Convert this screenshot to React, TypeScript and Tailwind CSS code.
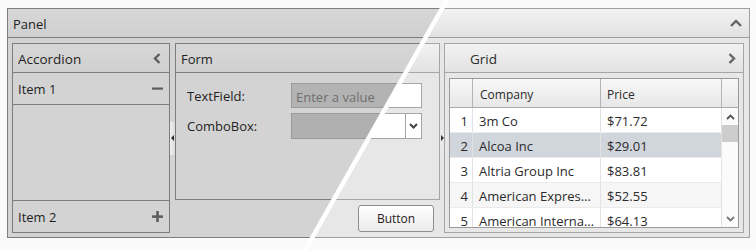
import React from "react";

type Theme = {
  side: "left" | "right";
  page: string;
  panelBorder: string;
  boxBorder: string;
  body: string;
  header: string;
  text: string;
  icon: string;
  input: string;
  combo: string;
  comboBtn: string;
  handle: string;
  arrow: string;
};

const dark: Theme = {
  side: "left",
  page: "bg-[#fafafa]",
  panelBorder: "border-[#7d7d7d]",
  boxBorder: "border-[#7d7d7d]",
  body: "bg-[#d3d3d3]",
  header: "bg-[linear-gradient(#d7d7d7,#d0d0d0)]",
  text: "text-[#1f1f1f]",
  icon: "#5e5e5e",
  input: "bg-[#b3b3b3] border-[#9a9a9a] placeholder:text-[#6f6f6f]",
  combo: "bg-[#b0b0b0] border-[#9a9a9a]",
  comboBtn: "bg-[#b0b0b0] border-[#9a9a9a]",
  handle: "bg-[linear-gradient(90deg,#f0f0f0,#dcdcdc)]",
  arrow: "#2a2a2a",
};

const light: Theme = {
  side: "right",
  page: "bg-[#fafafa]",
  panelBorder: "border-[#a0a0a0]",
  boxBorder: "border-[#a6a6a6]",
  body: "bg-[#e7e7e7]",
  header: "bg-[linear-gradient(#f2f2f2,#e2e2e2)]",
  text: "text-[#2b2b2b]",
  icon: "#666666",
  input: "bg-white border-[#a6a6a6] placeholder:text-[#8e8e8e]",
  combo: "bg-white border-[#a6a6a6]",
  comboBtn: "bg-white border-[#a6a6a6]",
  handle: "bg-[#e9e9e9]",
  arrow: "#333333",
};

const Chevron = ({ dir, c }: { dir: "up" | "down" | "left" | "right"; c: string }) => {
  if (dir === "up")
    return (
      <svg width="12" height="8" viewBox="0 0 12 8">
        <path d="M1 7 L6 2 L11 7" fill="none" stroke={c} strokeWidth="2.4" />
      </svg>
    );
  if (dir === "down")
    return (
      <svg width="9" height="6" viewBox="0 0 9 6">
        <path d="M1 1 L4.5 4.5 L8 1" fill="none" stroke={c} strokeWidth="2" />
      </svg>
    );
  if (dir === "left")
    return (
      <svg width="8" height="11" viewBox="0 0 8 11">
        <path d="M6.5 1 L2 5.5 L6.5 10" fill="none" stroke={c} strokeWidth="2.4" />
      </svg>
    );
  return (
    <svg width="8" height="11" viewBox="0 0 8 11">
      <path d="M1.5 1 L6 5.5 L1.5 10" fill="none" stroke={c} strokeWidth="2.4" />
    </svg>
  );
};

const Minus = ({ c }: { c: string }) => (
  <svg width="11" height="11" viewBox="0 0 11 11">
    <rect x="0" y="4.5" width="11" height="2.2" fill={c} />
  </svg>
);

const Plus = ({ c }: { c: string }) => (
  <svg width="11" height="11" viewBox="0 0 11 11">
    <rect x="0" y="4.3" width="11" height="2.6" fill={c} />
    <rect x="4.2" y="0" width="2.6" height="11" fill={c} />
  </svg>
);

const rows = [
  { n: 1, company: "3m Co", price: "$71.72", bg: "bg-white" },
  { n: 2, company: "Alcoa Inc", price: "$29.01", bg: "bg-[#d1d5dc]" },
  { n: 3, company: "Altria Group Inc", price: "$83.81", bg: "bg-white" },
  { n: 4, company: "American Expres…", price: "$52.55", bg: "bg-[#f6f6f6]" },
  { n: 5, company: "American Interna…", price: "$64.13", bg: "bg-white" },
];

function Table({ show }: { show: boolean }) {
  return (
    <div className="w-[290px] h-[150px] border border-[#9a9a9a] bg-white flex flex-col overflow-hidden text-[#2b2b2b]">
      <div className="h-[29px] shrink-0 flex border-b border-[#a9a9a9] bg-[linear-gradient(#f8f8f8,#e7e7e7)] text-[12px]">
        <div className="w-[23px] border-r border-[#b3b3b3]" />
        <div className="w-[128px] border-r border-[#b3b3b3] pl-[7px] pt-[3px] flex items-center">{show && "Company"}</div>
        <div className="w-[121px] border-r border-[#b3b3b3] pl-[6px] pt-[3px] flex items-center">{show && "Price"}</div>
        <div className="w-[16px]" />
      </div>
      <div className="flex-1 flex min-h-0">
        <div className="w-[272px] flex flex-col text-[13px]">
          {rows.map((r) => (
            <div key={r.n} className={`h-[25px] shrink-0 flex border-b border-[#ebebeb] ${r.bg}`}>
              <div className="w-[23px] border-r border-[#e2e2e2] flex items-center justify-end pr-[4px] pt-[3px]">
                {show && r.n}
              </div>
              <div className="w-[128px] border-r border-[#e2e2e2] pl-[6px] pt-[3px] flex items-center whitespace-nowrap">
                {show && r.company}
              </div>
              <div className="w-[121px] border-r border-[#e2e2e2] pl-[6px] pt-[3px] flex items-center">
                {show && r.price}
              </div>
            </div>
          ))}
        </div>
        <div className="w-[16px] flex flex-col bg-[#fbfbfb]">
          <div className="h-[17px] flex items-center justify-center">
            <svg width="9" height="6" viewBox="0 0 9 6">
              <path d="M1 5 L4.5 1.5 L8 5" fill="none" stroke="#555" strokeWidth="1.8" />
            </svg>
          </div>
          <div className="h-[17px] bg-[#cdcdcd]" />
          <div className="flex-1" />
          <div className="h-[16px] flex items-center justify-center">
            <svg width="9" height="6" viewBox="0 0 9 6">
              <path d="M1 1 L4.5 4.5 L8 1" fill="none" stroke="#777" strokeWidth="1.8" />
            </svg>
          </div>
        </div>
      </div>
    </div>
  );
}

function Handle({ t, dir }: { t: Theme; dir: "left" | "right" }) {
  return (
    <div className={`w-full h-[33px] flex items-center justify-center ${t.handle}`}>
      <svg width="3" height="6" viewBox="0 0 3 6">
        {dir === "left" ? <path d="M3 0 L0 3 L3 6 Z" fill={t.arrow} /> : <path d="M0 0 L3 3 L0 6 Z" fill={t.arrow} />}
      </svg>
    </div>
  );
}

function Scene({ t }: { t: Theme }) {
  const L = t.side === "left";
  const R = t.side === "right";
  return (
    <div className={`w-[756px] h-[250px] pt-[8px] pl-[7px] font-['Open_Sans',sans-serif] text-[13px] ${t.page} ${t.text}`}>
      <div className={`w-[743px] h-[230px] border flex flex-col ${t.panelBorder} ${t.body}`}>
        <div className={`h-[29px] shrink-0 border-b flex items-center justify-between pl-[5px] pr-[7px] ${t.panelBorder} ${t.header}`}>
          <span className="pt-[3px]">{L && "Panel"}</span>
          <Chevron dir="up" c={t.icon} />
        </div>
        <div className="flex-1 flex pl-[4px] pr-[5px] pt-[5px] pb-[4px]">
          {/* Accordion */}
          <div className={`w-[158px] shrink-0 border flex flex-col ${t.boxBorder}`}>
            <div className={`h-[29px] shrink-0 border-b flex items-center justify-between pl-[5px] pr-[8px] ${t.boxBorder} ${t.header}`}>
              <span className="text-[13.5px] pt-[2px]">{L && "Accordion"}</span>
              <Chevron dir="left" c={t.icon} />
            </div>
            <div className={`h-[32px] shrink-0 border-b flex items-center justify-between pl-[5px] pr-[6px] ${t.boxBorder}`}>
              <span className="pt-[2px]">{L && "Item 1"}</span>
              <Minus c={t.icon} />
            </div>
            <div className="flex-1" />
            <div className={`h-[32px] shrink-0 border-t flex items-center justify-between pl-[5px] pr-[6px] ${t.boxBorder}`}>
              <span className="pt-[2px]">{L && "Item 2"}</span>
              <Plus c={t.icon} />
            </div>
          </div>
          <div className="w-[5px] shrink-0 flex items-center">
            <Handle t={t} dir="left" />
          </div>
          {/* Form */}
          <div className="w-[265px] shrink-0 flex flex-col">
            <div className={`flex-1 border flex flex-col ${t.boxBorder}`}>
              <div className={`h-[29px] shrink-0 border-b flex items-center pl-[5px] ${t.boxBorder} ${t.header}`}>
                <span className="pt-[3px]">{L && "Form"}</span>
              </div>
              <div className="flex flex-col gap-[5px] pt-[10px] pl-[11px]">
                <div className="flex items-center">
                  <span className="w-[104px] pt-[3px]">{L && "TextField:"}</span>
                  <input
                    readOnly
                    placeholder={L ? "Enter a value" : ""}
                    className={`w-[131px] h-[25px] border pl-[4px] pt-[2px] text-[13px] outline-none ${t.input}`}
                  />
                </div>
                <div className="flex items-center">
                  <span className="w-[104px] pt-[2px]">{L && "ComboBox:"}</span>
                  <div className={`w-[131px] h-[26px] border flex justify-end ${t.combo}`}>
                    <div className={`w-[16px] border-l flex items-center justify-center ${t.comboBtn}`}>
                      <Chevron dir="down" c="#444444" />
                    </div>
                  </div>
                </div>
              </div>
            </div>
            <div className="h-[33px] shrink-0 flex justify-end items-start pt-[5px] pr-[6px]">
              <button className="w-[76px] h-[27px] pt-[1px] border border-[#8c8c8c] rounded-[3px] bg-[linear-gradient(#ffffff,#ebebeb)] text-[12px] text-[#2a1a1a]">
                {R && "Button"}
              </button>
            </div>
          </div>
          <div className="w-[4px] shrink-0 flex items-center">
            <Handle t={t} dir="right" />
          </div>
          {/* Grid */}
          <div className={`w-[300px] shrink-0 border flex flex-col ${t.boxBorder}`}>
            <div className={`h-[29px] shrink-0 border-b flex items-center justify-between pl-[25px] pr-[7px] ${t.boxBorder} ${t.header}`}>
              <span className="text-[13.5px] pt-[2px]">{R && "Grid"}</span>
              <Chevron dir="right" c={t.icon} />
            </div>
            <div className="flex-1 pt-[5px] pl-[4px]">
              <Table show={R} />
            </div>
          </div>
        </div>
      </div>
    </div>
  );
}

export default function App() {
  return (
    <div className="relative w-[756px] h-[250px] overflow-hidden">
      <Scene t={dark} />
      <div className="absolute inset-0 [clip-path:polygon(447px_0,756px_0,756px_250px,305px_250px)]">
        <Scene t={light} />
      </div>
      <svg className="absolute inset-0 pointer-events-none" width="756" height="250" viewBox="0 0 756 250">
        <line x1="448.5" y1="-3" x2="303.5" y2="253" stroke="#ffffff" strokeWidth="4.5" />
      </svg>
    </div>
  );
}
